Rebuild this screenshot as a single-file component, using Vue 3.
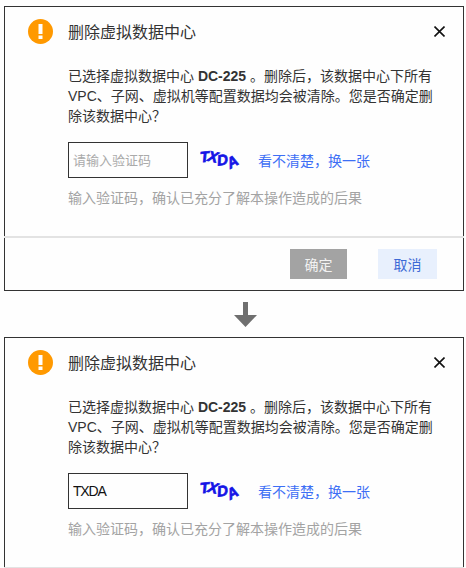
<script setup>
const dialogs = [
  { code: "", placeholder: "请输入验证码", footer: true },
  { code: "TXDA", placeholder: "请输入验证码", footer: false },
];
const captcha = [
  { ch: "T", rot: -6, y: -3 },
  { ch: "X", rot: 12, y: -3 },
  { ch: "D", rot: -8, y: 0 },
  { ch: "A", rot: -30, y: 2 },
];
</script>

<template>
  <div class="page">
    <template v-for="(d, i) in dialogs" :key="i">
      <div v-if="i === 1" class="arrow">
        <svg width="23" height="25" viewBox="0 0 23 25">
          <path d="M9 0h5v13h9L11.5 25 0 13h9z" fill="#6f6f6f" />
        </svg>
      </div>
      <section class="dialog">
        <header class="head">
          <svg class="warn" width="25" height="25" viewBox="0 0 25 25">
            <circle cx="12.5" cy="12.5" r="12.5" fill="#ff9900" />
            <rect x="10.5" y="5" width="4" height="10" fill="#fff" />
            <rect x="10.5" y="16.5" width="4" height="3.5" fill="#fff" />
          </svg>
          <h2 class="title">删除虚拟数据中心</h2>
          <svg class="close" width="11" height="11" viewBox="0 0 11 11">
            <path d="M0.5 0.5l10 10M10.5 0.5l-10 10" stroke="#111" stroke-width="1.6" fill="none" />
          </svg>
        </header>
        <div class="body">
          <p class="msg">
            已选择虚拟数据中心 <b>DC-225</b> 。删除后，该数据中心下所有VPC、子网、虚拟机等配置数据均会被清除。您是否确定删除该数据中心？
          </p>
          <div class="verify">
            <input class="code" :value="d.code" :placeholder="d.placeholder" />
            <span class="captcha">
              <span
                v-for="c in captcha"
                :key="c.ch"
                :style="{ transform: `translateY(${c.y}px) rotate(${c.rot}deg)` }"
              >{{ c.ch }}</span>
            </span>
            <a class="refresh">看不清楚，换一张</a>
          </div>
          <p class="hint">输入验证码，确认已充分了解本操作造成的后果</p>
        </div>
        <footer v-if="d.footer" class="foot">
          <button class="btn ok">确定</button>
          <button class="btn cancel">取消</button>
        </footer>
      </section>
    </template>
  </div>
</template>

<style scoped>
.page {
  width: 466px;
  height: 568px;
  overflow: hidden;
  box-sizing: border-box;
  padding: 6px 2px 0 4px;
  background: #fefefe;
  font-family: "Liberation Sans", "Noto Sans CJK SC", sans-serif;
}

.dialog {
  border: 1px solid #333;
  height: 285px;
  box-sizing: border-box;
}

.head {
  display: flex;
  align-items: center;
  height: 49px;
  padding: 0 18px 0 23px;
}

.warn {
  flex-shrink: 0;
}

.title {
  flex: 1;
  margin: 0 0 0 15px;
  padding-bottom: 2px;
  font-size: 16px;
  font-weight: 400;
  color: #333;
}

.body {
  height: 182px;
  margin: 0 -1px;
  padding: 10px 27px 0 64px;
  box-sizing: border-box;
  border-bottom: 2px solid #e3e3e3;
}

.msg {
  margin: 0;
  font-size: 14px;
  line-height: 20px;
  color: #333;
}

.verify {
  display: flex;
  align-items: center;
  margin-top: 16px;
}

.code {
  width: 120px;
  height: 36px;
  box-sizing: border-box;
  border: 1px solid #333;
  border-radius: 0;
  outline: none;
  padding: 0 4px;
  background: transparent;
  font-family: "Liberation Sans", "Noto Sans CJK SC", sans-serif;
  font-size: 14px;
  letter-spacing: -1.2px;
  color: #111;
}

.code::placeholder {
  font-size: 13px;
  letter-spacing: 0;
  color: #aaa;
}

.captcha {
  display: flex;
  width: 40px;
  margin-left: 12px;
  font-size: 15px;
  font-style: italic;
  font-weight: 700;
  line-height: 18px;
  color: #1414e6;
}

.captcha span {
  display: block;
  margin-right: -1px;
  -webkit-text-stroke: 0.7px #1414e6;
}

.refresh {
  margin-left: 18px;
  font-size: 14px;
  color: #3d6ff5;
}

.hint {
  margin: 10px 0 0;
  font-size: 14px;
  line-height: 20px;
  color: #a3a3a3;
}

.foot {
  display: flex;
  justify-content: flex-end;
  gap: 31px;
  padding: 11px 26px 0 0;
}

.btn {
  height: 30px;
  border: 0;
  padding: 0;
  font-family: "Liberation Sans", "Noto Sans CJK SC", sans-serif;
  font-size: 14px;
}

.ok {
  width: 57px;
  background: #a3a3a3;
  color: #f2f2f2;
}

.cancel {
  width: 59px;
  background: #e8f0fd;
  color: #3d6ad6;
}

.arrow {
  display: flex;
  height: 46px;
  padding: 11px 0 0 230px;
  box-sizing: border-box;
}
</style>
